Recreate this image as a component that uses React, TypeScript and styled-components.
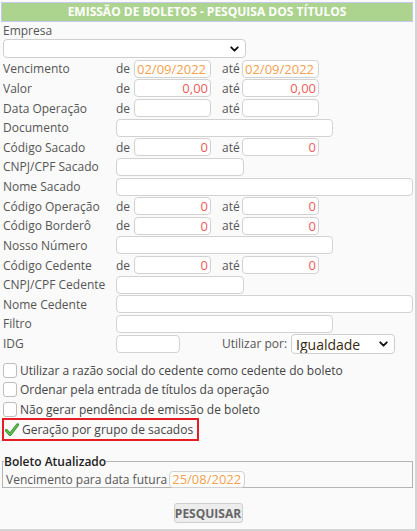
import React from "react";
import styled, { createGlobalStyle } from "styled-components";
import { ChevronDown } from "lucide-react";

const Global = createGlobalStyle`
  html, body { margin: 0; padding: 0; background: #ffffff; }
  body { font-family: "Open Sans", "Noto Sans", sans-serif; font-size: 12px; color: #555; }
  * { box-sizing: border-box; }
`;

const Panel = styled.div`
  width: 417px;
  height: 531px;
  background: #fafafa;
  border-right: 2px solid #d4d4d4;
  border-bottom: 2px solid #d4d4d4;
  padding-top: 2px;
  position: relative;
`;

const Header = styled.div`
  margin: 0 2px 0 1px;
  height: 20px;
  background: #acd48e;
  border: 1px solid #c6c8f0;
  color: #fff;
  font-weight: 700;
  font-size: 12px;
  text-align: center;
  line-height: 18px;
  letter-spacing: 0px;
`;

const Form = styled.div`
  padding: 0;
`;

const Caption = styled.div`
  padding-left: 3px;
  height: 17px;
  line-height: 18px;
  color: #555;
`;

const SelectWrap = styled.div<{ $w: number; $h: number }>`
  position: relative;
  width: ${(p) => p.$w}px;
  height: ${(p) => p.$h}px;
`;

const SelectBox = styled.select<{ $big?: boolean }>`
  appearance: none;
  width: 100%;
  height: 100%;
  border: 1px solid #cfcfcf;
  border-radius: 4px;
  background: #fff;
  font-family: "Open Sans", sans-serif;
  font-size: ${(p) => (p.$big ? "14px" : "12px")};
  color: #3a2a10;
  padding: 0 0 0 4px;
  outline: none;
`;

const Chevron = styled(ChevronDown)`
  position: absolute;
  right: 5px;
  top: 50%;
  transform: translateY(-50%);
  pointer-events: none;
  color: #111;
`;

const EmpresaSelect = styled.div`
  margin: 0 0 0 3px;
`;

const Rows = styled.div`
  margin-top: 1px;
`;

const Row = styled.div`
  display: flex;
  align-items: center;
  height: 19.64px;
`;

const Label = styled.span`
  width: 116px;
  padding-left: 3px;
  color: #555;
  white-space: nowrap;
`;

const De = styled.span`
  width: 18px;
  color: #555;
`;

const Ate = styled.span`
  width: 20px;
  margin-left: 11px;
  color: #555;
`;

const Field = styled.input<{ $w: number; $tone?: "date" | "num" }>`
  width: ${(p) => p.$w}px;
  height: 18px;
  border: 1px solid #d2d2d2;
  border-radius: 4px;
  background: #fff;
  font-family: "Open Sans", sans-serif;
  font-size: 13px;
  padding: 0 2px;
  outline: none;
  color: ${(p) => (p.$tone === "num" ? "#f05a5a" : "#f4a04c")};
  text-align: ${(p) => (p.$tone === "num" ? "right" : "left")};
`;

const UsePor = styled.span`
  margin-left: 42px;
  margin-right: 4px;
  color: #555;
`;

const Checks = styled.div`
  margin-top: 7px;
`;

const CheckRow = styled.label`
  display: flex;
  align-items: center;
  height: 19.7px;
  padding-left: 3px;
  color: #444;
  white-space: nowrap;
`;

const Box = styled.span`
  width: 14px;
  height: 15px;
  border: 1px solid #bdbdbd;
  border-radius: 3px;
  background: #fff;
  margin-right: 3px;
`;

const Highlight = styled.label`
  display: flex;
  align-items: center;
  width: 197px;
  height: 23px;
  margin: -1px 0 0 2px;
  border: 2px solid #e41e24;
  padding-left: 1px;
  color: #444;
  white-space: nowrap;
`;

const CheckMark = styled.svg`
  width: 14px;
  height: 14px;
  margin-right: 3px;
`;

const Fieldset = styled.fieldset`
  margin: 12px 2px 0 2px;
  padding: 0 0 0 3px;
  border: 1px solid #b4b4b4;
  border-radius: 0;
  height: 35px;
`;

const Legend = styled.legend`
  padding: 0;
  margin-left: -2px;
  color: #222;
  font-weight: 600;
  font-size: 12px;
`;

const FieldsetRow = styled.div`
  display: flex;
  align-items: center;
  height: 18px;
  color: #555;
`;

const SmallField = styled(Field)`
  height: 17px;
  margin-left: 2px;
`;

const Actions = styled.div`
  display: flex;
  justify-content: center;
  margin-top: 15px;
`;

const Button = styled.button`
  width: 69px;
  height: 20px;
  background: #ededed;
  border: 1px solid #cfcfcf;
  border-radius: 3px;
  color: #666;
  font-family: "Open Sans", sans-serif;
  font-weight: 700;
  font-size: 12px;
  padding: 0;
  margin-left: 1px;
`;

type Range = { label: string; kind: "date" | "num"; from: string; to: string };
type Text = { label: string; width: number };
type Item = ({ type: "range" } & Range) | ({ type: "text" } & Text);

const items: Item[] = [
  { type: "range", label: "Vencimento", kind: "date", from: "02/09/2022", to: "02/09/2022" },
  { type: "range", label: "Valor", kind: "num", from: "0,00", to: "0,00" },
  { type: "range", label: "Data Operação", kind: "date", from: "", to: "" },
  { type: "text", label: "Documento", width: 217 },
  { type: "range", label: "Código Sacado", kind: "num", from: "0", to: "0" },
  { type: "text", label: "CNPJ/CPF Sacado", width: 128 },
  { type: "text", label: "Nome Sacado", width: 297 },
  { type: "range", label: "Código Operação", kind: "num", from: "0", to: "0" },
  { type: "range", label: "Código Borderô", kind: "num", from: "0", to: "0" },
  { type: "text", label: "Nosso Número", width: 217 },
  { type: "range", label: "Código Cedente", kind: "num", from: "0", to: "0" },
  { type: "text", label: "CNPJ/CPF Cedente", width: 128 },
  { type: "text", label: "Nome Cedente", width: 297 },
  { type: "text", label: "Filtro", width: 217 },
];

const checks = [
  "Utilizar a razão social do cedente como cedente do boleto",
  "Ordenar pela entrada de títulos da operação",
  "Não gerar pendência de emissão de boleto",
];

export default function App() {
  return (
    <>
      <Global />
      <Panel>
        <Header>EMISSÃO DE BOLETOS - PESQUISA DOS TÍTULOS</Header>
        <Form>
          <Caption>Empresa</Caption>
          <EmpresaSelect>
            <SelectWrap $w={243} $h={19}>
              <SelectBox defaultValue="">
                <option value=""></option>
              </SelectBox>
              <Chevron size={13} strokeWidth={3.5} />
            </SelectWrap>
          </EmpresaSelect>
          <Rows>
            {items.map((it) =>
              it.type === "range" ? (
                <Row key={it.label}>
                  <Label>{it.label}</Label>
                  <De>de</De>
                  <Field $w={77} $tone={it.kind} defaultValue={it.from} />
                  <Ate>até</Ate>
                  <Field $w={77} $tone={it.kind} defaultValue={it.to} />
                </Row>
              ) : (
                <Row key={it.label}>
                  <Label>{it.label}</Label>
                  <Field $w={it.width} />
                </Row>
              )
            )}
            <Row>
              <Label>IDG</Label>
              <Field $w={64} />
              <UsePor>Utilizar por:</UsePor>
              <SelectWrap $w={104} $h={20}>
                <SelectBox $big defaultValue="Igualdade">
                  <option>Igualdade</option>
                </SelectBox>
                <Chevron size={13} strokeWidth={3.5} />
              </SelectWrap>
            </Row>
          </Rows>
          <Checks>
            {checks.map((c) => (
              <CheckRow key={c}>
                <Box />
                {c}
              </CheckRow>
            ))}
            <Highlight>
              <CheckMark viewBox="0 0 14 14">
                <path
                  d="M1.5 7.5 L5 11.5 L12.5 1.8"
                  fill="none"
                  stroke="#2f8a2f"
                  strokeWidth="3"
                  strokeLinecap="round"
                  strokeLinejoin="round"
                />
                <path
                  d="M1.5 7.5 L5 11.5 L12.5 1.8"
                  fill="none"
                  stroke="#5fc24a"
                  strokeWidth="1.6"
                  strokeLinecap="round"
                  strokeLinejoin="round"
                />
              </CheckMark>
              Geração por grupo de sacados
            </Highlight>
          </Checks>
          <Fieldset>
            <Legend>Boleto Atualizado</Legend>
            <FieldsetRow>
              Vencimento para data futura
              <SmallField $w={76} $tone="date" defaultValue="25/08/2022" />
            </FieldsetRow>
          </Fieldset>
          <Actions>
            <Button>PESQUISAR</Button>
          </Actions>
        </Form>
      </Panel>
    </>
  );
}
